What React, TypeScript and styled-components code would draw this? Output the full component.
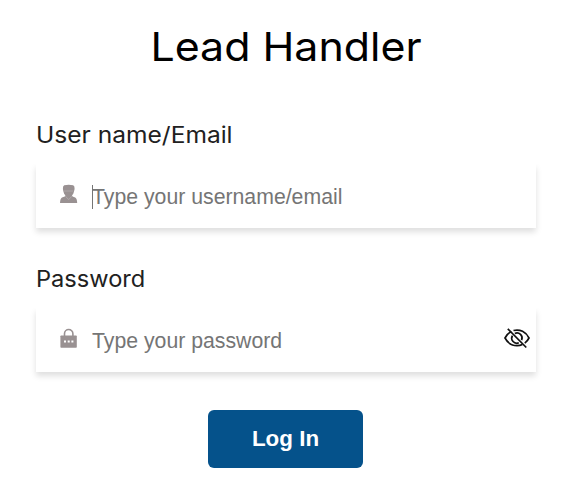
import React, { useState } from "react";
import styled, { createGlobalStyle } from "styled-components";

const GlobalStyle = createGlobalStyle`
  * { box-sizing: border-box; }
  body { margin: 0; background: #fff; overflow: hidden; }
`;

const Form = styled.form`
  display: flex;
  flex-direction: column;
  width: 500px;
  height: 490px;
  margin-left: 36px;
  padding-top: 21px;
  font-family: Inter, sans-serif;
`;

const Title = styled.h1`
  margin: 0 0 47px;
  height: 52px;
  line-height: 52px;
  font-size: 40px;
  font-weight: 400;
  text-align: center;
  white-space: nowrap;
  color: #000;
  transform: scaleX(1.072);
`;

const Field = styled.div`
  display: flex;
  flex-direction: column;
  height: 144px;
`;

const Label = styled.label<{ $stretch: number }>`
  align-self: flex-start;
  height: 30px;
  line-height: 30px;
  font-size: 22.5px;
  white-space: nowrap;
  color: #212121;
  transform: scaleX(${(p) => p.$stretch});
  transform-origin: left center;
`;

const InputRow = styled.div`
  display: flex;
  align-items: center;
  height: 64px;
  margin-top: 14px;
  padding: 2px 6px 0 24px;
  background: #fff;
  box-shadow: 0 4px 6px rgba(0, 0, 0, 0.13);
  clip-path: inset(0 -8px -14px -8px);
`;

const InputArea = styled.div`
  position: relative;
  flex: 1;
  min-width: 0;
  margin-left: 14px;
`;

const Caret = styled.span`
  position: absolute;
  left: 0;
  top: 1px;
  width: 1px;
  height: 24px;
  background: #757575;
`;

const Input = styled.input`
  display: block;
  width: 100%;
  height: 26px;
  padding: 0;
  border: 0;
  outline: 0;
  background: transparent;
  font: 21.25px "Liberation Sans", Arial, sans-serif;
  color: #333;
  &::placeholder { color: #757575; opacity: 1; }
`;

const FieldIcon = styled.svg`
  flex: none;
  width: 18px;
  height: 20px;
  margin-top: -7px;
`;

const ToggleButton = styled.button`
  flex: none;
  display: flex;
  margin: -6px 0 0;
  padding: 0;
  border: 0;
  background: none;
  cursor: pointer;
`;

const SubmitButton = styled.button`
  align-self: center;
  width: 155px;
  height: 58px;
  margin-left: -1px;
  margin-top: 2px;
  padding: 0;
  border: 0;
  border-radius: 6px;
  background: #05528b;
  color: #fff;
  font: bold 22.4px "Liberation Sans", Arial, sans-serif;
`;

const UserIcon = () => (
  <FieldIcon viewBox="0 0 18 20">
    <path
      fill="#999192"
      d="M4.2 1.2Q8.7 .2 13.2 1.2Q14.8 1.8 14.6 5L14 7.4Q13.6 9.8 12 11.2L12.6 12.4L15.2 13.6Q17 14.6 17.2 19H0Q.2 14.6 2 13.6L4.8 12.4L5.4 11.2Q3.8 9.8 3.4 7.4L2.9 5Q2.7 1.8 4.2 1.2Z"
    />
    <path d="M4 7H13.4M5.4 12.2L8.7 15.6L12 12.2" fill="none" stroke="#b8b2b3" strokeWidth=".7" />
  </FieldIcon>
);

const LockIcon = () => (
  <FieldIcon viewBox="0 0 18 20">
    <path d="M4.5 8V5.7a4.2 4.2 0 0 1 8.4 0V8" fill="none" stroke="#999192" strokeWidth="1.6" />
    <rect x="0.4" y="7.5" width="16.4" height="12.2" rx=".8" fill="#999192" />
    <path d="M4 12.6h2v2h-2zM7.7 12.6h2v2h-2zM11.4 12.6h2v2h-2z" fill="#fff" />
  </FieldIcon>
);

const HiddenEyeIcon = () => (
  <svg width="26" height="22" viewBox="0 0 26 22" fill="none" stroke="#111" strokeWidth="1.7">
    <path d="M7.3 4.6C4.5 6 2.3 8.5 1 11C3.4 15.5 7.5 18.7 13 18.7C15 18.7 16.8 18.3 18.4 17.5" />
    <path d="M9.5 3.5C16 1.8 22 5 25 11C24 13 22.5 14.8 20.8 16.1" />
    <path d="M8.4 8.6A5.1 5.1 0 0 0 14.8 15.8M10.8 6.4A5.1 5.1 0 0 1 17.6 13.1" />
    <path d="M3.8 1.8L22.3 20.5" />
  </svg>
);

export default function App() {
  const [visible, setVisible] = useState(false);
  return (
    <>
      <GlobalStyle />
      <Form onSubmit={(e) => e.preventDefault()}>
        <Title>Lead Handler</Title>
        <Field>
          <Label htmlFor="username" $stretch={1.091}>User name/Email</Label>
          <InputRow>
            <UserIcon />
            <InputArea>
              <Caret />
              <Input id="username" type="text" placeholder="Type your username/email" />
            </InputArea>
          </InputRow>
        </Field>
        <Field>
          <Label htmlFor="password" $stretch={1.05}>Password</Label>
          <InputRow>
            <LockIcon />
            <InputArea>
              <Input
                id="password"
                type={visible ? "text" : "password"}
                placeholder="Type your password"
              />
            </InputArea>
            <ToggleButton type="button" aria-label="Toggle password" onClick={() => setVisible(!visible)}>
              <HiddenEyeIcon />
            </ToggleButton>
          </InputRow>
        </Field>
        <SubmitButton type="submit">Log In</SubmitButton>
      </Form>
    </>
  );
}
